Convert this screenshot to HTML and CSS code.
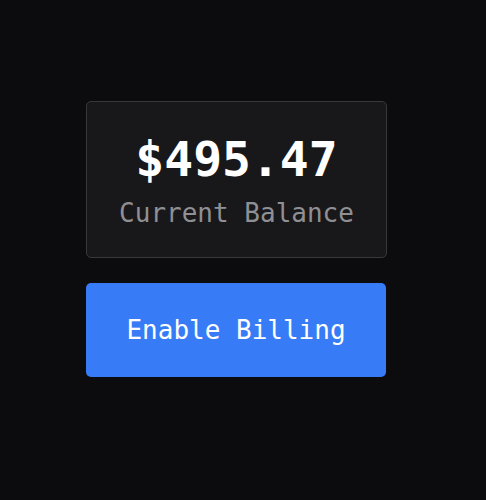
FILE: index.html
```html
<!DOCTYPE html>
<html>
<head>
<meta charset="utf-8">
<link rel="stylesheet" href="styles.css">
</head>
<body>
<main class="wrap">
  <section class="card">
    <div class="amount">$495.47</div>
    <div class="label">Current Balance</div>
  </section>
  <button class="btn">Enable Billing</button>
</main>
</body>
</html>
```
FILE: styles.css
```css
html, body {
  margin: 0;
  padding: 0;
  background: #0c0c0e;
  height: 100%;
}
body {
  font-family: "DejaVu Sans Mono", "Liberation Mono", monospace;
}
.wrap {
  padding: 101px 0 0 86px;
  width: 301px;
  display: flex;
  flex-direction: column;
  gap: 25px;
}
.card {
  box-sizing: border-box;
  width: 301px;
  height: 157px;
  background: #18181b;
  border: 1px solid #38383c;
  border-radius: 5px;
  display: flex;
  flex-direction: column;
  align-items: center;
  padding-top: 25px;
}
.amount {
  color: #ffffff;
  font-size: 48px;
  font-weight: bold;
  line-height: 64px;
}
.label {
  color: #8f8f94;
  font-size: 26px;
  line-height: 32px;
  margin-top: 6px;
}
.btn {
  box-sizing: border-box;
  width: 300px;
  height: 94px;
  border: none;
  border-radius: 5px;
  background: #387bf6;
  color: #ffffff;
  font-family: "DejaVu Sans Mono", "Liberation Mono", monospace;
  font-size: 26px;
  font-weight: 500;
  padding: 0;
}
```
